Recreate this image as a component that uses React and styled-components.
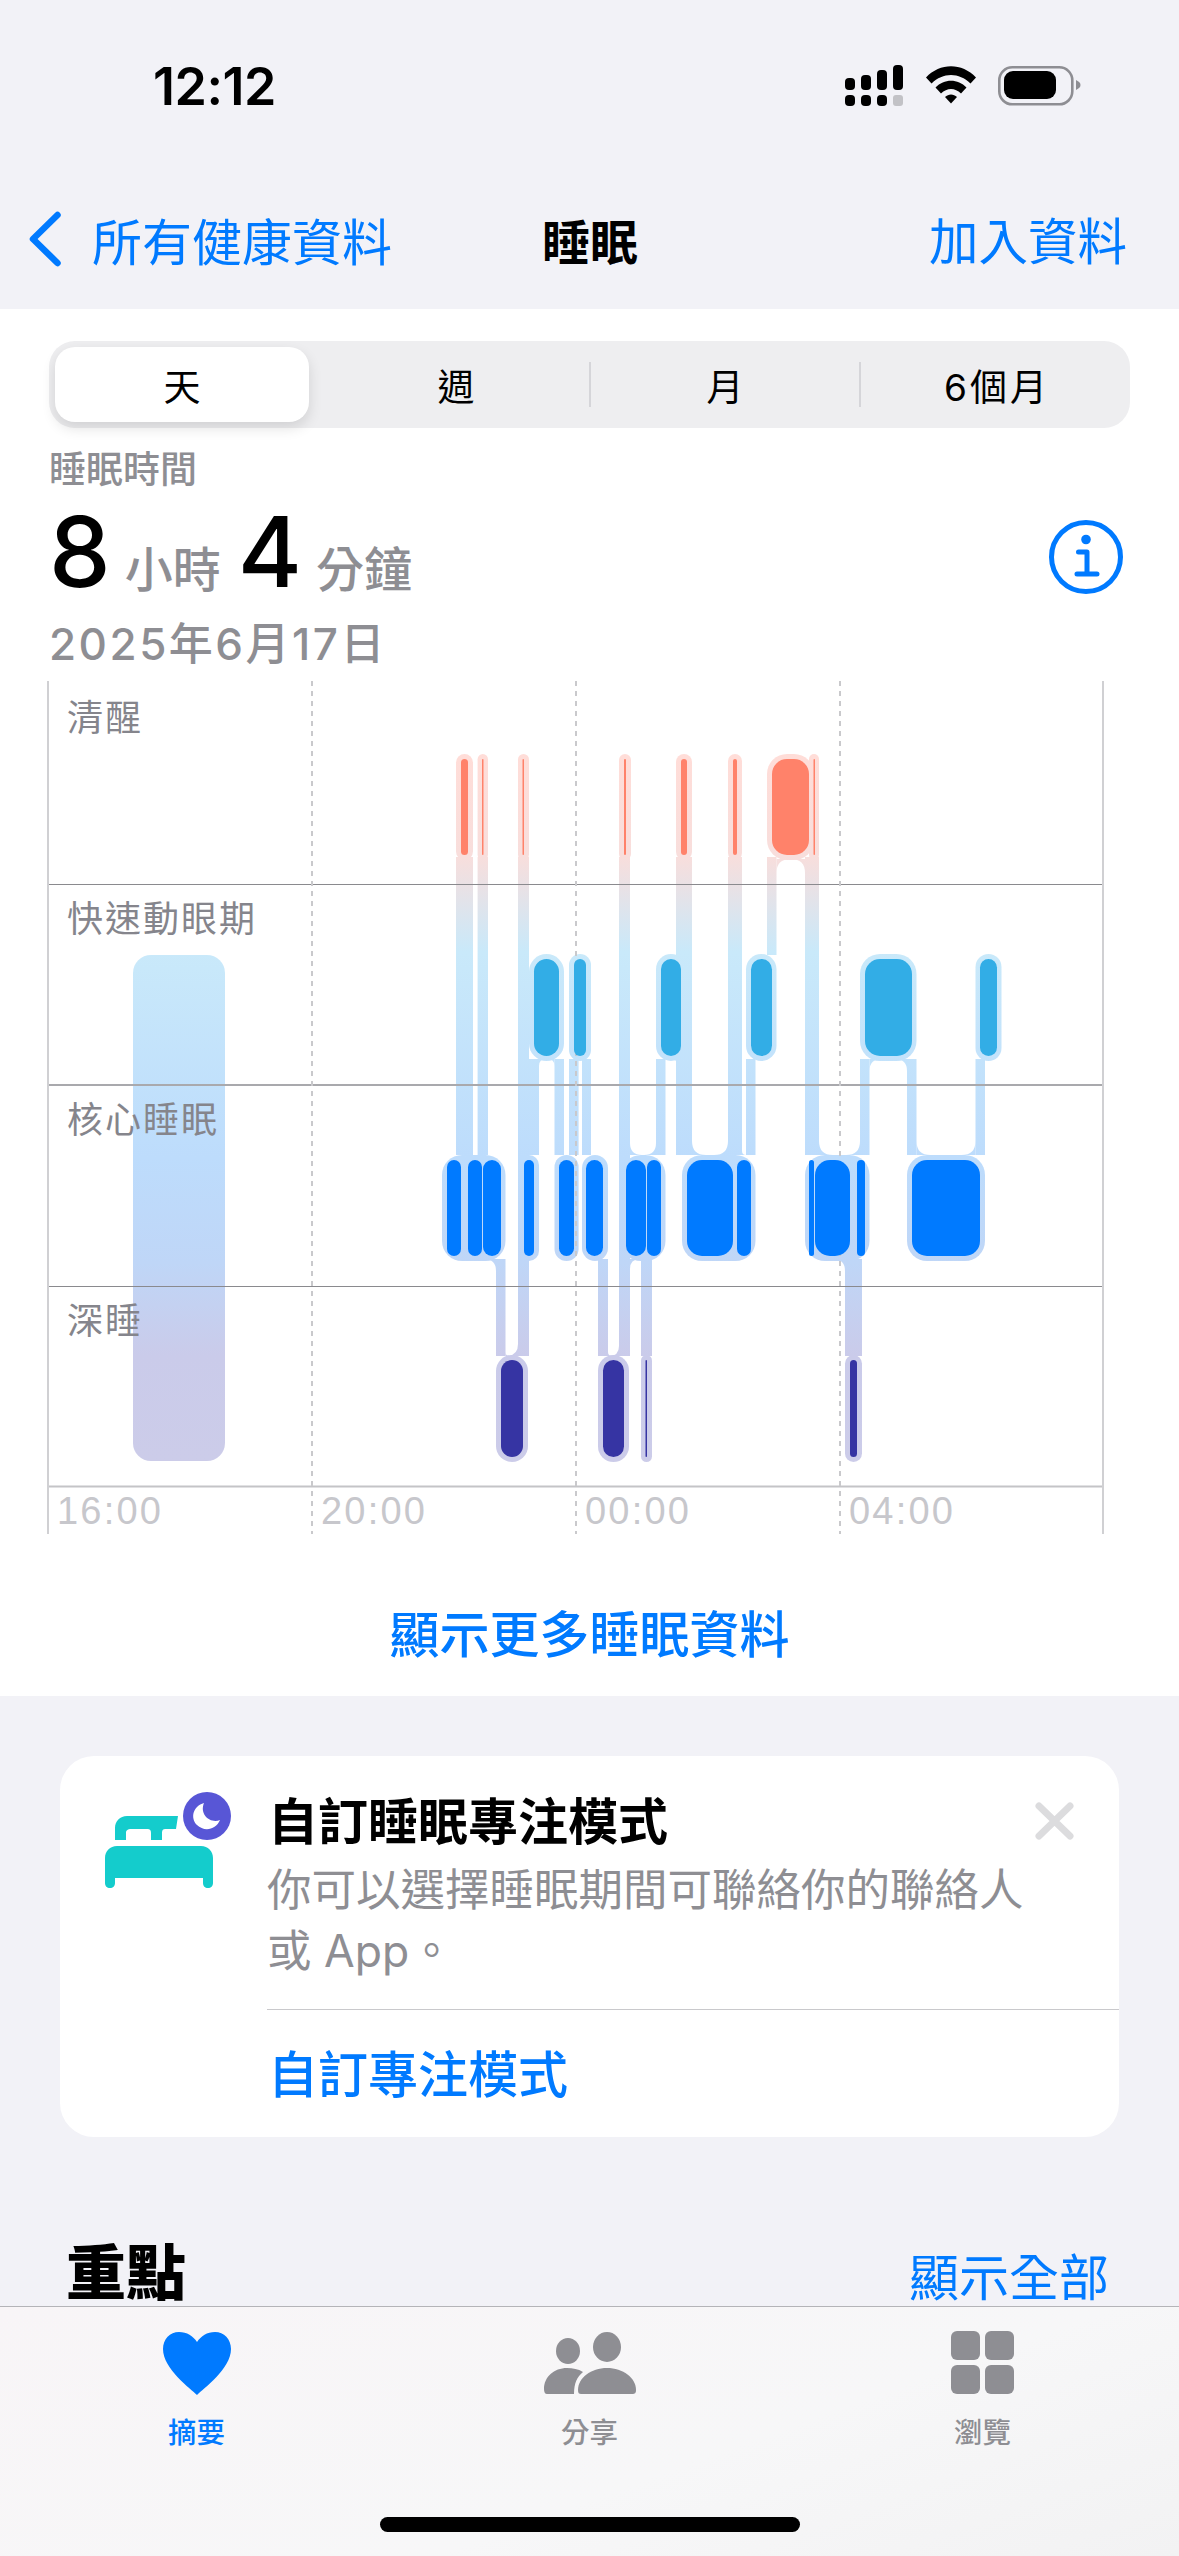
import React from "react";
import styled, { createGlobalStyle } from "styled-components";

const blue = "#007AFF";
const gray = "#8E8E93";
const fontStack = `Inter, "Noto Sans CJK TC", "Noto Sans", sans-serif`;

const GlobalStyle = createGlobalStyle`
  html, body {
    margin: 0;
    padding: 0;
    background: #f2f2f7;
  }
  * {
    box-sizing: border-box;
  }
`;

const Screen = styled.div`
  position: relative;
  width: 1179px;
  height: 2556px;
  overflow: hidden;
  background: #f2f2f7;
  font-family: ${fontStack};
  color: #000;
`;

const StatusBar = styled.div`
  height: 172px;
  display: flex;
  align-items: center;
  justify-content: space-between;
  padding: 0 98px 0 153px;
`;

const Clock = styled.div`
  font-size: 52px;
  font-weight: 600;
  letter-spacing: -0.5px;
`;

const NavBar = styled.div`
  height: 137px;
  display: grid;
  grid-template-columns: 1fr auto 1fr;
  align-items: center;
  padding: 0 52px 4px 53px;
`;

const BackLink = styled.div`
  display: flex;
  align-items: center;
  gap: 30px;
  margin-left: -25px;
  color: ${blue};
  font-size: 50px;
`;

const NavTitle = styled.div`
  font-size: 48px;
  font-weight: 700;
`;

const NavAction = styled.div`
  justify-self: end;
  color: ${blue};
  font-size: 49.5px;
`;

const Panel = styled.div`
  height: 1387px;
  background: #fff;
  padding-top: 32px;
  display: flex;
  flex-direction: column;
`;

const Segmented = styled.div`
  margin: 0 49px;
  height: 87px;
  border-radius: 26px;
  background: #eeeef0;
  display: grid;
  grid-template-columns: 267px 268px 270px 264px;
  padding: 6px;
`;

const Segment = styled.div`
  position: relative;
  display: flex;
  align-items: center;
  justify-content: center;
  font-size: 37px;
  letter-spacing: ${(props) => (props.$wide ? "3px" : "0")};
  padding-left: ${(props) => (props.$wide ? "10px" : "0")};
  border-radius: 20px;
  margin-right: ${(props) => (props.$active ? "13px" : "0")};
  background: ${(props) => (props.$active ? "#fff" : "transparent")};
  box-shadow: ${(props) =>
    props.$active ? "0 6px 14px rgba(0, 0, 0, 0.12)" : "none"};

  &::before {
    content: "";
    display: ${(props) => (props.$divider ? "block" : "none")};
    position: absolute;
    left: -1px;
    top: 15px;
    bottom: 15px;
    width: 2px;
    background: #d5d5d9;
  }
`;

const Summary = styled.div`
  padding: 22px 49px 0;
`;

const SummaryLabel = styled.div`
  color: ${gray};
  font-size: 37px;
  font-weight: 500;
  line-height: 40px;
`;

const ValueRow = styled.div`
  display: flex;
  align-items: baseline;
  justify-content: space-between;
  height: 124px;
  line-height: 124px;
`;

const ValueGroup = styled.div`
  display: flex;
  align-items: baseline;
`;

const BigNumber = styled.span`
  font-size: 98px;
  font-weight: 500;
  margin-right: 14px;
`;

const Unit = styled.span`
  color: ${gray};
  font-size: 48px;
  font-weight: 500;
  margin-right: 17px;
`;

const InfoIcon = styled.svg`
  width: 76px;
  height: 76px;
  align-self: center;
  margin: 10px 6px 0 0;
`;

const DateText = styled.div`
  padding-top: 5px;
  color: ${gray};
  font-size: 44px;
  font-weight: 500;
  letter-spacing: 2.5px;
  line-height: 50px;
`;

const ChartWrap = styled.div`
  position: relative;
  margin-top: 12px;
  width: 1179px;
  height: 853px;
`;

const ChartSvg = styled.svg`
  display: block;
  width: 1179px;
  height: 853px;
`;

const StageLabels = styled.div`
  position: absolute;
  left: 67px;
  top: 0;
  display: grid;
  grid-auto-rows: 201px;
`;

const StageLabel = styled.div`
  padding-top: 15px;
  color: #85858c;
  font-size: 36px;
  letter-spacing: 2px;
  line-height: 44px;
`;

const TimeLabels = styled.div`
  position: absolute;
  left: 48px;
  bottom: 0;
  display: grid;
  grid-template-columns: repeat(4, 264px);
`;

const TimeLabel = styled.div`
  padding-left: 9px;
  color: #c7c7cc;
  font-family: "Liberation Sans", sans-serif;
  font-size: 38px;
  letter-spacing: 2.2px;
  line-height: 46px;
`;

const MoreLink = styled.div`
  margin-top: 71px;
  text-align: center;
  color: ${blue};
  font-size: 50px;
  font-weight: 500;
  line-height: 60px;
`;

const Card = styled.div`
  margin: 60px 60px 0;
  height: 381px;
  border-radius: 34px;
  background: #fff;
  display: grid;
  grid-template-columns: 207px 1fr;
  overflow: hidden;
`;

const CardIcon = styled.svg`
  width: 130px;
  height: 100px;
  margin: 35px 0 0 45px;
`;

const CardBody = styled.div`
  display: flex;
  flex-direction: column;
  position: relative;
`;

const CardTitle = styled.div`
  padding: 34px 0 0 1px;
  font-size: 50px;
  font-weight: 700;
  line-height: 64px;
`;

const CardText = styled.div`
  height: 155px;
  padding: 6px 60px 0 0;
  color: ${gray};
  font-size: 44.5px;
  line-height: 61px;
`;

const CardAction = styled.div`
  flex: 1;
  display: flex;
  align-items: center;
  padding: 0 0 6px 1px;
  border-top: 1.5px solid #c9c9cc;
  color: ${blue};
  font-size: 50px;
  font-weight: 500;
`;

const CloseIcon = styled.svg`
  position: absolute;
  top: 46px;
  right: 45px;
  width: 39px;
  height: 38px;
`;

const SectionHeader = styled.div`
  margin: 96px 70px 0 66px;
  display: flex;
  align-items: center;
  justify-content: space-between;
`;

const SectionTitle = styled.div`
  font-size: 60px;
  font-weight: 900;
  line-height: 70px;
`;

const SectionLink = styled.div`
  color: ${blue};
  font-size: 50px;
  line-height: 70px;
  padding-top: 10px;
`;

const TabBar = styled.div`
  position: absolute;
  left: 0;
  right: 0;
  bottom: 0;
  height: 250px;
  display: grid;
  grid-template-columns: repeat(3, 1fr);
  border-top: 1.5px solid #b4b4b8;
  background: linear-gradient(160deg, #f8f5f7, #f7f7f8 60%, #f2f2f3);
  padding-top: 24px;
`;

const TabItem = styled.div`
  display: flex;
  flex-direction: column;
  align-items: center;
  color: ${(props) => (props.$active ? blue : gray)};
  font-size: 28.5px;
  font-weight: 500;
`;

const TabIcon = styled.svg`
  display: block;
  height: 66px;
  width: 100px;
  margin-bottom: 13px;
  fill: currentColor;
`;

const HomeBar = styled.div`
  position: absolute;
  left: 380px;
  bottom: 24px;
  width: 420px;
  height: 15px;
  border-radius: 8px;
  background: #000;
`;

const stages = [
  {
    color: "#FF826A",
    top: 760,
    bottom: 856,
    rows: [
      [461, 468],
      [482, 483.5],
      [522.5, 524],
      [624, 626],
      [681, 687],
      [733, 737],
      [772, 809],
      [813.5, 815]
    ],
    halos: [
      [456, 473],
      [477.6, 488],
      [518, 529],
      [619, 631],
      [676, 692],
      [728, 742],
      [767, 814],
      [809, 819]
    ]
  },
  {
    color: "#32ADE6",
    top: 960,
    bottom: 1057,
    rows: [
      [534, 559],
      [574, 586],
      [661, 681],
      [751, 772],
      [865, 912],
      [980, 997]
    ],
    halos: [
      [529, 564],
      [569, 591],
      [656, 686],
      [746, 776.5],
      [860, 916.5],
      [975.5, 1001.5]
    ]
  },
  {
    color: "#007AFF",
    top: 1161,
    bottom: 1257,
    rows: [
      [447, 461],
      [468, 482],
      [483, 501],
      [524, 534],
      [559, 574],
      [586, 603],
      [626, 646],
      [647, 661],
      [687, 733],
      [737, 751],
      [809, 814],
      [815, 850],
      [857, 865],
      [912, 980]
    ],
    halos: [
      [442, 505.5],
      [519, 539],
      [554.5, 578.6],
      [582, 608],
      [621, 665.5],
      [682, 755.5],
      [805, 869.5],
      [907, 985]
    ]
  },
  {
    color: "#3634A3",
    top: 1361,
    bottom: 1458,
    rows: [
      [501, 523],
      [603, 624],
      [645.5, 647],
      [850, 857]
    ],
    halos: [
      [496, 528],
      [598, 629],
      [641, 652],
      [845, 862]
    ]
  }
];

// vertical connectors between stages: x1, x2, y1, y2
const bands = [
  [456, 473, 858, 1156],
  [477.6, 488, 858, 1156],
  [518, 529, 858, 1357],
  [619, 630, 858, 1357],
  [676, 692, 858, 1156],
  [728, 742, 858, 1156],
  [767, 776.5, 858, 956],
  [805, 819, 858, 1156],
  [529, 539, 1060, 1156],
  [554.5, 564, 1060, 1156],
  [569, 578.6, 1060, 1156],
  [582, 591, 1060, 1156],
  [656, 665.5, 1060, 1156],
  [746, 755.5, 1060, 1156],
  [860, 869.5, 1060, 1156],
  [907, 916.5, 1060, 1156],
  [975.5, 985, 1060, 1156],
  [496, 505.5, 1260, 1357],
  [598, 608, 1260, 1357],
  [641, 652, 1260, 1357],
  [845, 862, 1260, 1357]
];

// concave corners where a connector meets a bar: x, y, dx, dy, r
const fillets = [
  [496, 1260, -1, 1, 12],
  [518, 1357, -1, -1, 12],
  [505.5, 1357, 1, -1, 4],
  [619, 1357, -1, -1, 10],
  [608, 1357, 1, -1, 4],
  [630, 1260, 1, 1, 10],
  [776.5, 860, 1, 1, 14],
  [805, 860, -1, 1, 14],
  [869.5, 1060, 1, 1, 12],
  [907, 1060, -1, 1, 12],
  [916.5, 1156, 1, -1, 14],
  [975.5, 1156, -1, -1, 14],
  [692, 1156, 1, -1, 14],
  [728, 1156, -1, -1, 14],
  [630, 1156, 1, -1, 12],
  [656, 1156, -1, -1, 12],
  [539, 1060, 1, 1, 7],
  [554.5, 1060, -1, 1, 7],
  [819, 1156, 1, -1, 14],
  [860, 1156, -1, -1, 14],
  [682, 1060, -1, 1, 14],
  [845, 1260, -1, 1, 12],
  [742, 1156, 1, -1, 4]
];

const haloFill = "url(#sleepFade)";

const SleepChart = () => (
  <ChartSvg viewBox="0 682 1179 853">
    <defs>
      <linearGradient
        id="sleepFade"
        gradientUnits="userSpaceOnUse"
        x1="0"
        y1="755"
        x2="0"
        y2="1462"
      >
        <stop offset="0" stopColor="#FFDDD8" />
        <stop offset="0.145" stopColor="#F8DEDC" />
        <stop offset="0.28" stopColor="#C9E9FA" />
        <stop offset="0.57" stopColor="#BDDCFC" />
        <stop offset="0.72" stopColor="#BFD6F7" />
        <stop offset="0.85" stopColor="#CACBEA" />
        <stop offset="1" stopColor="#CCCCE9" />
      </linearGradient>
    </defs>

    <rect x="133" y="956" width="92" height="506" rx="18" fill={haloFill} />

    {bands.map(([x1, x2, y1, y2]) => (
      <rect
        key={`${x1}-${y1}`}
        x={x1}
        y={y1}
        width={x2 - x1}
        height={y2 - y1}
        fill={haloFill}
      />
    ))}
    {fillets.map(([x, y, dx, dy, r]) => (
      <path
        key={`${x}-${y}-${dx}`}
        d={`M${x} ${y}L${x + dx * r} ${y}Q${x} ${y} ${x} ${y + dy * r}Z`}
        fill={haloFill}
      />
    ))}
    {stages.map((stage) =>
      stage.halos.map(([x1, x2]) => (
        <rect
          key={`${stage.top}-${x1}`}
          x={x1}
          y={stage.top - 5}
          width={x2 - x1}
          height={stage.bottom - stage.top + 10}
          rx={Math.min((x2 - x1) / 2, 20)}
          fill={haloFill}
        />
      ))
    )}

    <line x1="48" x2="1103" y1="885.5" y2="885.5" stroke="#8a8a8e" strokeWidth="1" />
    <line x1="48" x2="1103" y1="1086" y2="1086" stroke="#a9a9ad" strokeWidth="2" />
    <line x1="48" x2="1103" y1="1287.5" y2="1287.5" stroke="#8a8a8e" strokeWidth="1" />
    <line x1="48" x2="1103" y1="1487.5" y2="1487.5" stroke="#c4c4c7" strokeWidth="2" />
    <line x1="48" x2="48" y1="682" y2="1535" stroke="#d0d0d3" strokeWidth="2" />
    <line x1="1103" x2="1103" y1="682" y2="1535" stroke="#d0d0d3" strokeWidth="2" />
    {[312, 576, 840].map((x) => (
      <line
        key={x}
        x1={x}
        x2={x}
        y1="682"
        y2="1535"
        stroke="#c9c9cc"
        strokeWidth="2"
        strokeDasharray="5 5"
      />
    ))}

    {stages.map((stage) =>
      stage.rows.map(([x1, x2]) => (
        <rect
          key={`${stage.top}-solid-${x1}`}
          x={x1}
          y={stage.top}
          width={x2 - x1}
          height={stage.bottom - stage.top}
          rx={Math.min((x2 - x1) / 2, 15)}
          fill={stage.color}
        />
      ))
    )}
  </ChartSvg>
);

const StatusIcons = () => (
  <svg width="236" height="42" viewBox="846 67 236 42">
    <rect x="846" y="80" width="10" height="12" rx="4" />
    <rect x="862" y="77" width="10" height="15" rx="4" />
    <rect x="878" y="72" width="10" height="20" rx="4" />
    <rect x="894" y="67" width="10" height="25" rx="4" />
    <rect x="846" y="97" width="10" height="11" rx="4" />
    <rect x="862" y="97" width="10" height="11" rx="4" />
    <rect x="878" y="97" width="10" height="11" rx="4" />
    <rect x="894" y="97" width="10" height="11" rx="3" fill="#c2c2c6" />
    <path d="M927 79.5C941 64.5 963 64.5 977 79.5L971.5 85.5C960 74 944 74 932.500 85.5Z" />
    <path d="M936.500 89.500C945 80.500 959 80.500 967.500 89.500L962 95.500C956 89.500 948 89.500 942 95.500Z" />
    <path d="M946 99C949.500 95.500 954.500 95.500 958 99L952 105.500Z" />
    <rect x="1000.300" y="69.300" width="73" height="37" rx="13" fill="none" stroke="#8e8e93" strokeWidth="2.600" />
    <rect x="1005" y="73" width="52" height="28" rx="9" />
    <path d="M1077 82C1080 83.500 1081.500 85 1081.500 87C1081.500 89 1080 90.500 1077 92Z" fill="#8e8e93" />
  </svg>
);

const App = () => (
  <Screen>
    <GlobalStyle />
    <StatusBar>
      <Clock>12:12</Clock>
      <StatusIcons />
    </StatusBar>
    <NavBar>
      <BackLink>
        <svg width="34" height="56" viewBox="0 0 34 56" fill="none">
          <path d="M29.500 4L5 28L29.500 52" stroke={blue} strokeWidth="6.500" strokeLinecap="round" strokeLinejoin="round" />
        </svg>
        所有健康資料
      </BackLink>
      <NavTitle>睡眠</NavTitle>
      <NavAction>加入資料</NavAction>
    </NavBar>
    <Panel>
      <Segmented>
        <Segment $active>天</Segment>
        <Segment>週</Segment>
        <Segment $divider>月</Segment>
        <Segment $divider $wide>6個月</Segment>
      </Segmented>
      <Summary>
        <SummaryLabel>睡眠時間</SummaryLabel>
        <ValueRow>
          <ValueGroup>
            <BigNumber>8</BigNumber>
            <Unit>小時</Unit>
            <BigNumber>4</BigNumber>
            <Unit>分鐘</Unit>
          </ValueGroup>
          <InfoIcon viewBox="0 0 76 76" fill="none">
            <circle cx="38" cy="38" r="34.500" stroke={blue} strokeWidth="5" />
            <circle cx="38" cy="20.500" r="4.800" fill={blue} />
            <path d="M30.500 33H39V55M29 55H49" stroke={blue} strokeWidth="5" strokeLinecap="round" strokeLinejoin="round" />
          </InfoIcon>
        </ValueRow>
        <DateText>2025年6月17日</DateText>
      </Summary>
      <ChartWrap>
        <SleepChart />
        <StageLabels>
          <StageLabel>清醒</StageLabel>
          <StageLabel>快速動眼期</StageLabel>
          <StageLabel>核心睡眠</StageLabel>
          <StageLabel>深睡</StageLabel>
        </StageLabels>
        <TimeLabels>
          <TimeLabel>16:00</TimeLabel>
          <TimeLabel>20:00</TimeLabel>
          <TimeLabel>00:00</TimeLabel>
          <TimeLabel>04:00</TimeLabel>
        </TimeLabels>
      </ChartWrap>
      <MoreLink>顯示更多睡眠資料</MoreLink>
    </Panel>
    <Card>
      <CardIcon viewBox="105 1791 130 100">
        <path
          d="M115 1840V1828C115 1821 120 1816 127 1816H178L176 1829H165C162 1829 162 1832 162 1834V1840H151V1833C151 1830 150 1829 147 1829H131C128 1829 126 1830 126 1833V1840Z"
          fill="#14CCCC"
        />
        <path
          d="M105 1858C105 1851 110 1846 117 1846H201C208 1846 213 1851 213 1858V1883C213 1886 211 1888 208 1888C205 1888 203 1886 203 1883V1878H115V1883C115 1886 113 1888 110 1888C107 1888 105 1886 105 1883Z"
          fill="#14CCCC"
        />
        <circle cx="207" cy="1816" r="24" fill="#5856D6" />
        <path
          d="M204 1803C193 1806 190 1818 197 1825C204 1832 216 1830 220 1820C211 1824 199 1815 204 1803Z"
          fill="#fff"
        />
      </CardIcon>
      <CardBody>
        <CardTitle>自訂睡眠專注模式</CardTitle>
        <CardText>你可以選擇睡眠期間可聯絡你的聯絡人或 App。</CardText>
        <CardAction>自訂專注模式</CardAction>
        <CloseIcon viewBox="0 0 39 38" fill="none">
          <path d="M4 4L35 34M35 4L4 34" stroke="#dcdcde" strokeWidth="7" strokeLinecap="round" />
        </CloseIcon>
      </CardBody>
    </Card>
    <SectionHeader>
      <SectionTitle>重點</SectionTitle>
      <SectionLink>顯示全部</SectionLink>
    </SectionHeader>
    <TabBar>
      <TabItem $active>
        <TabIcon viewBox="0 0 100 66">
          <path d="M50 64C44 58 16 38 16 18C16 8 23 1 32 1C40 1 46 5 50 11C54 5 60 1 68 1C77 1 84 8 84 18C84 38 56 58 50 64Z" />
        </TabIcon>
        摘要
      </TabItem>
      <TabItem>
        <TabIcon viewBox="0 0 100 66">
          <ellipse cx="28" cy="20" rx="12" ry="13" />
          <ellipse cx="67" cy="16" rx="14" ry="15" />
          <path d="M4 58C4 46 14 37 27 37C33 37 38 38 43 41C37 46 34 52 34 63H7C5 63 4 61 4 58Z" />
          <path d="M38 59C38 47 51 37 67 37C83 37 96 47 96 59C96 62 95 63 92 63H41C39 63 38 62 38 59Z" />
        </TabIcon>
        分享
      </TabItem>
      <TabItem>
        <TabIcon viewBox="0 0 100 66">
          <rect x="18" y="0" width="29" height="29" rx="6" />
          <rect x="52" y="0" width="29" height="29" rx="6" />
          <rect x="18" y="34" width="29" height="29" rx="6" />
          <rect x="52" y="34" width="29" height="29" rx="6" />
        </TabIcon>
        瀏覽
      </TabItem>
      <HomeBar />
    </TabBar>
  </Screen>
);

export default App;
